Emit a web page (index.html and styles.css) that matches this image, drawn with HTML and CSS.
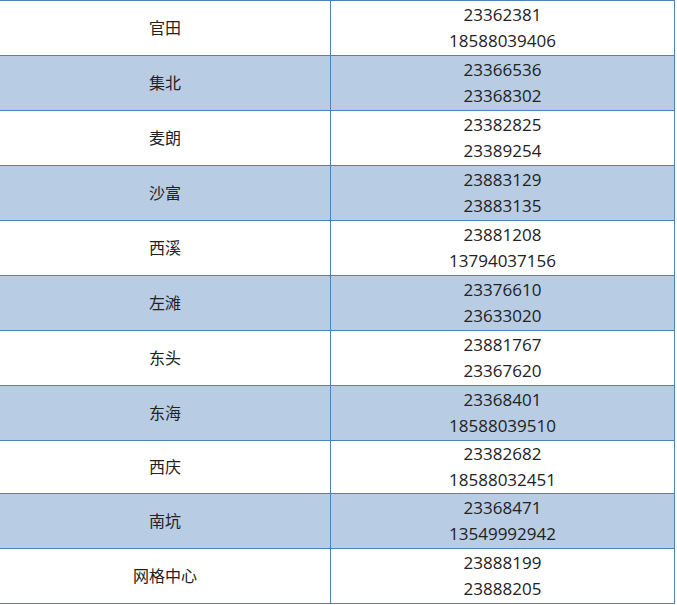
FILE: index.html
```html
<!DOCTYPE html>
<html lang="zh">
<head>
<meta charset="utf-8">
<link rel="stylesheet" href="styles.css">
</head>
<body>
<div class="table">
  <div class="row"><div class="name">官田</div><div class="tel"><span>23362381</span><span>18588039406</span></div></div>
  <div class="row alt"><div class="name">集北</div><div class="tel"><span>23366536</span><span>23368302</span></div></div>
  <div class="row"><div class="name">麦朗</div><div class="tel"><span>23382825</span><span>23389254</span></div></div>
  <div class="row alt"><div class="name">沙富</div><div class="tel"><span>23883129</span><span>23883135</span></div></div>
  <div class="row"><div class="name">西溪</div><div class="tel"><span>23881208</span><span>13794037156</span></div></div>
  <div class="row alt"><div class="name">左滩</div><div class="tel"><span>23376610</span><span>23633020</span></div></div>
  <div class="row"><div class="name">东头</div><div class="tel"><span>23881767</span><span>23367620</span></div></div>
  <div class="row alt"><div class="name">东海</div><div class="tel"><span>23368401</span><span>18588039510</span></div></div>
  <div class="row short"><div class="name">西庆</div><div class="tel"><span>23382682</span><span>18588032451</span></div></div>
  <div class="row alt"><div class="name">南坑</div><div class="tel"><span>23368471</span><span>13549992942</span></div></div>
  <div class="row"><div class="name">网格中心</div><div class="tel"><span>23888199</span><span>23888205</span></div></div>
</div>
</body>
</html>
```
FILE: styles.css
```css
html, body {
  margin: 0;
  padding: 0;
  background: #ffffff;
}
body {
  font-family: "Noto Sans CJK SC", "Noto Sans", sans-serif;
  font-size: 16px;
  color: #222222;
}
.table {
  width: 675px;
  border-top: 1px solid #4f81bd;
  border-right: 1px solid #4f81bd;
  box-sizing: border-box;
}
.row {
  display: grid;
  grid-template-columns: 331px 1fr;
  height: 55px;
  border-bottom: 1px solid #4f81bd;
  box-sizing: border-box;
}
.row.short {
  height: 53px;
}
.row.alt {
  background: #b8cce4;
}
.name, .tel {
  display: flex;
  flex-direction: column;
  align-items: center;
  justify-content: center;
  line-height: 26px;
}
.name {
  border-right: 1px solid #4f81bd;
  padding-bottom: 3px;
}
.tel {
  font-family: "Open Sans", "Noto Sans CJK SC", sans-serif;
  font-size: 17px;
}
```
